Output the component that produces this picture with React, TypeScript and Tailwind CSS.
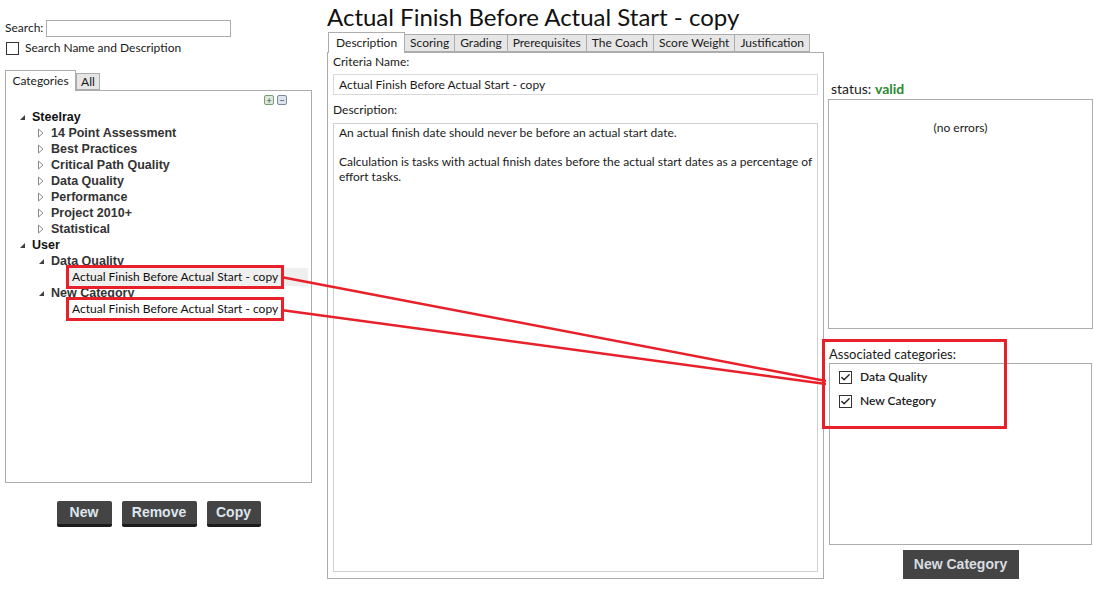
import { Check } from 'lucide-react';

const ui = { fontFamily: 'Lato, "Open Sans", sans-serif' };
const tree = { fontFamily: '"Liberation Sans", Arial, sans-serif' };

const steelray = ['14 Point Assessment', 'Best Practices', 'Critical Path Quality', 'Data Quality', 'Performance', 'Project 2010+', 'Statistical'];
const tabs = ['Description', 'Scoring', 'Grading', 'Prerequisites', 'The Coach', 'Score Weight', 'Justification'];

const Expanded = () => (
  <svg width="7" height="7" viewBox="0 0 7 7" className="shrink-0">
    <path d="M6 1 L6 6 L1 6 Z" fill="#404040" />
  </svg>
);

const Collapsed = () => (
  <svg width="6" height="10" viewBox="0 0 6 10" className="shrink-0">
    <path d="M0.5 1 L5 5 L0.5 9 Z" fill="none" stroke="#8c8c8c" />
  </svg>
);

const DarkButton = ({ label, className = '' }: { label: string; className?: string }) => (
  <div
    className={`h-[26px] flex items-center justify-center bg-[#444] border-b-[3px] border-[#1c1c1c] rounded-[2px] text-[14px] font-bold text-[#dde6ef] ${className}`}
    style={tree}
  >
    {label}
  </div>
);

const CheckBox = ({ checked = false }: { checked?: boolean }) => (
  <div className="w-[13px] h-[13px] border border-[#333] bg-white flex items-center justify-center shrink-0">
    {checked && <Check size={11} strokeWidth={3} color="#222" />}
  </div>
);

export default function App() {
  return (
    <div className="relative w-[1094px] h-[591px] bg-white overflow-hidden text-[#1a1a1a] flex" style={ui}>
      {/* left column */}
      <div className="w-[327px] shrink-0 pl-[5px]">
        <div className="mt-[20px] flex items-center h-[16px]">
          <span className="text-[12px]">Search:</span>
          <div className="ml-[3px] w-[185px] h-[17px] border border-[#abadb3]" />
        </div>
        <div className="mt-[5px] flex items-center h-[14px]">
          <div className="ml-[1px]">
            <CheckBox />
          </div>
          <span className="ml-[6px] text-[12px]">Search Name and Description</span>
        </div>
        <div className="mt-[15px] flex items-end h-[20px]">
          <div className="w-[71px] h-[21px] border border-b-0 border-[#acacac] bg-white text-[12px] flex items-center justify-center relative -mb-px z-10">
            Categories
          </div>
          <div className="w-[24px] h-[17px] border border-[#acacac] bg-[#e6e6e6] text-[12px] flex items-center justify-center">
            All
          </div>
        </div>
        <div className="relative w-[307px] h-[393px] border border-[#acacac]">
          <div className="absolute right-[24px] top-[4px] flex gap-[3px]">
            <div className="w-[10px] h-[10px] border border-[#7a9a7a] bg-[#dce8dc] rounded-[2px] flex items-center justify-center text-[9px] leading-none text-[#335533]">+</div>
            <div className="w-[10px] h-[10px] border border-[#7a8a9a] bg-[#dce4ec] rounded-[2px] flex items-center justify-center text-[9px] leading-none text-[#334455]">−</div>
          </div>
          <div className="pt-[18px] text-[12.5px] font-bold" style={tree}>
            <div className="h-[16px] flex items-center pl-[13px] gap-[6px] text-[#111]">
              <Expanded />
              <span>Steelray</span>
            </div>
            {steelray.map((s) => (
              <div key={s} className="h-[16px] flex items-center pl-[32px] gap-[7px] text-[#333]">
                <Collapsed />
                <span>{s}</span>
              </div>
            ))}
            <div className="h-[16px] flex items-center pl-[13px] gap-[6px] text-[#111]">
              <Expanded />
              <span>User</span>
            </div>
            <div className="h-[16px] flex items-center pl-[32px] gap-[6px] text-[#333]">
              <Expanded />
              <span>Data Quality</span>
            </div>
            <div className="h-[16px] flex items-center pl-[60px] pr-[3px]">
              <div className="flex-1 h-[18px] bg-[#efefef] flex items-center">
                <span className="relative z-10 border-[3px] border-[#e8202a] h-[24px] px-[3px] flex items-center font-normal text-[12px] text-[#111]" style={ui}>
                  Actual Finish Before Actual Start - copy
                </span>
              </div>
            </div>
            <div className="h-[16px] flex items-center pl-[32px] gap-[6px] text-[#333]">
              <Expanded />
              <span>New Category</span>
            </div>
            <div className="h-[16px] flex items-center pl-[60px]">
              <span className="relative z-10 border-[3px] border-[#e8202a] h-[24px] px-[3px] flex items-center font-normal text-[12px] text-[#111]" style={ui}>
                Actual Finish Before Actual Start - copy
              </span>
            </div>
          </div>
        </div>
        <div className="mt-[18px] flex justify-center gap-[10px] w-[307px]">
          <DarkButton label="New" className="w-[55px]" />
          <DarkButton label="Remove" className="w-[75px]" />
          <DarkButton label="Copy" className="w-[54px]" />
        </div>
      </div>

      {/* middle column */}
      <div className="w-[497px] shrink-0">
        <div className="h-[32px] text-[24px] leading-[34px] text-[#111] whitespace-nowrap">Actual Finish Before Actual Start - copy</div>
        <div className="flex items-end h-[20px]">
          {tabs.map((t, i) =>
            i === 0 ? (
              <div key={t} className="h-[21px] px-[7px] border border-b-0 border-[#acacac] bg-white text-[12px] flex items-center relative -mb-px z-10 ml-px">
                {t}
              </div>
            ) : (
              <div key={t} className="h-[18px] px-[5px] border border-l-0 border-[#acacac] bg-[#e6e6e6] text-[12px] flex items-center">
                {t}
              </div>
            )
          )}
        </div>
        <div className="h-[527px] border border-[#acacac] px-[5px] pt-[1px] flex flex-col">
          <div className="text-[12px] h-[16px] leading-[16px]">Criteria Name:</div>
          <div className="mt-[4px] h-[21px] border border-[#d9d9d9] text-[12px] flex items-center pl-[5px]">
            Actual Finish Before Actual Start - copy
          </div>
          <div className="mt-[7px] text-[12px] h-[16px] leading-[16px]">Description:</div>
          <div className="mt-[5px] flex-1 mb-[6px] border border-[#d0d0d0] px-[5px] pt-[2px] text-[12px] leading-[14.5px]">
            <p>An actual finish date should never be before an actual start date.</p>
            <p className="mt-[14.5px]">Calculation is tasks with actual finish dates before the actual start dates as a percentage of effort tasks.</p>
          </div>
        </div>
      </div>

      {/* right column */}
      <div className="relative w-[270px] shrink-0 pl-[4px] pt-[79px]">
        <div className="pl-[3px] text-[14px] h-[20px] leading-[20px]">
          status: <span className="font-bold text-[#2c8a32]">valid</span>
        </div>
        <div className="w-[265px] h-[230px] border border-[#acacac] flex justify-center pt-[19px] text-[12px]">
          (no errors)
        </div>
        <div className="mt-[16px] pl-[1px] text-[13px] h-[18px] leading-[18px]">Associated categories:</div>
        <div className="ml-[1px] w-[263px] h-[182px] border border-[#acacac] pt-[5px] pl-[9px] flex flex-col gap-[8px]">
          <div className="flex items-center gap-[8px] text-[12px] leading-[16px] font-semibold">
            <CheckBox checked />
            <span>Data Quality</span>
          </div>
          <div className="flex items-center gap-[8px] text-[12px] leading-[16px] font-semibold">
            <CheckBox checked />
            <span>New Category</span>
          </div>
        </div>
        <div className="mt-[5px] w-[265px] flex justify-center">
          <div className="w-[116px] h-[29px] bg-[#444] flex items-center justify-center text-[14px] font-bold text-[#d8dde2]" style={tree}>
            New Category
          </div>
        </div>
        <div className="absolute left-[-2px] top-[339px] w-[185px] h-[90px] border-[3px] border-[#e8202a] pointer-events-none" />
      </div>

      {/* annotation arrows */}
      <svg className="absolute inset-0 pointer-events-none" width="1094" height="591">
        <line x1="281" y1="277" x2="826" y2="381" stroke="#e8202a" strokeWidth="2.5" />
        <line x1="281" y1="310" x2="826" y2="384" stroke="#e8202a" strokeWidth="2.5" />
      </svg>
    </div>
  );
}
